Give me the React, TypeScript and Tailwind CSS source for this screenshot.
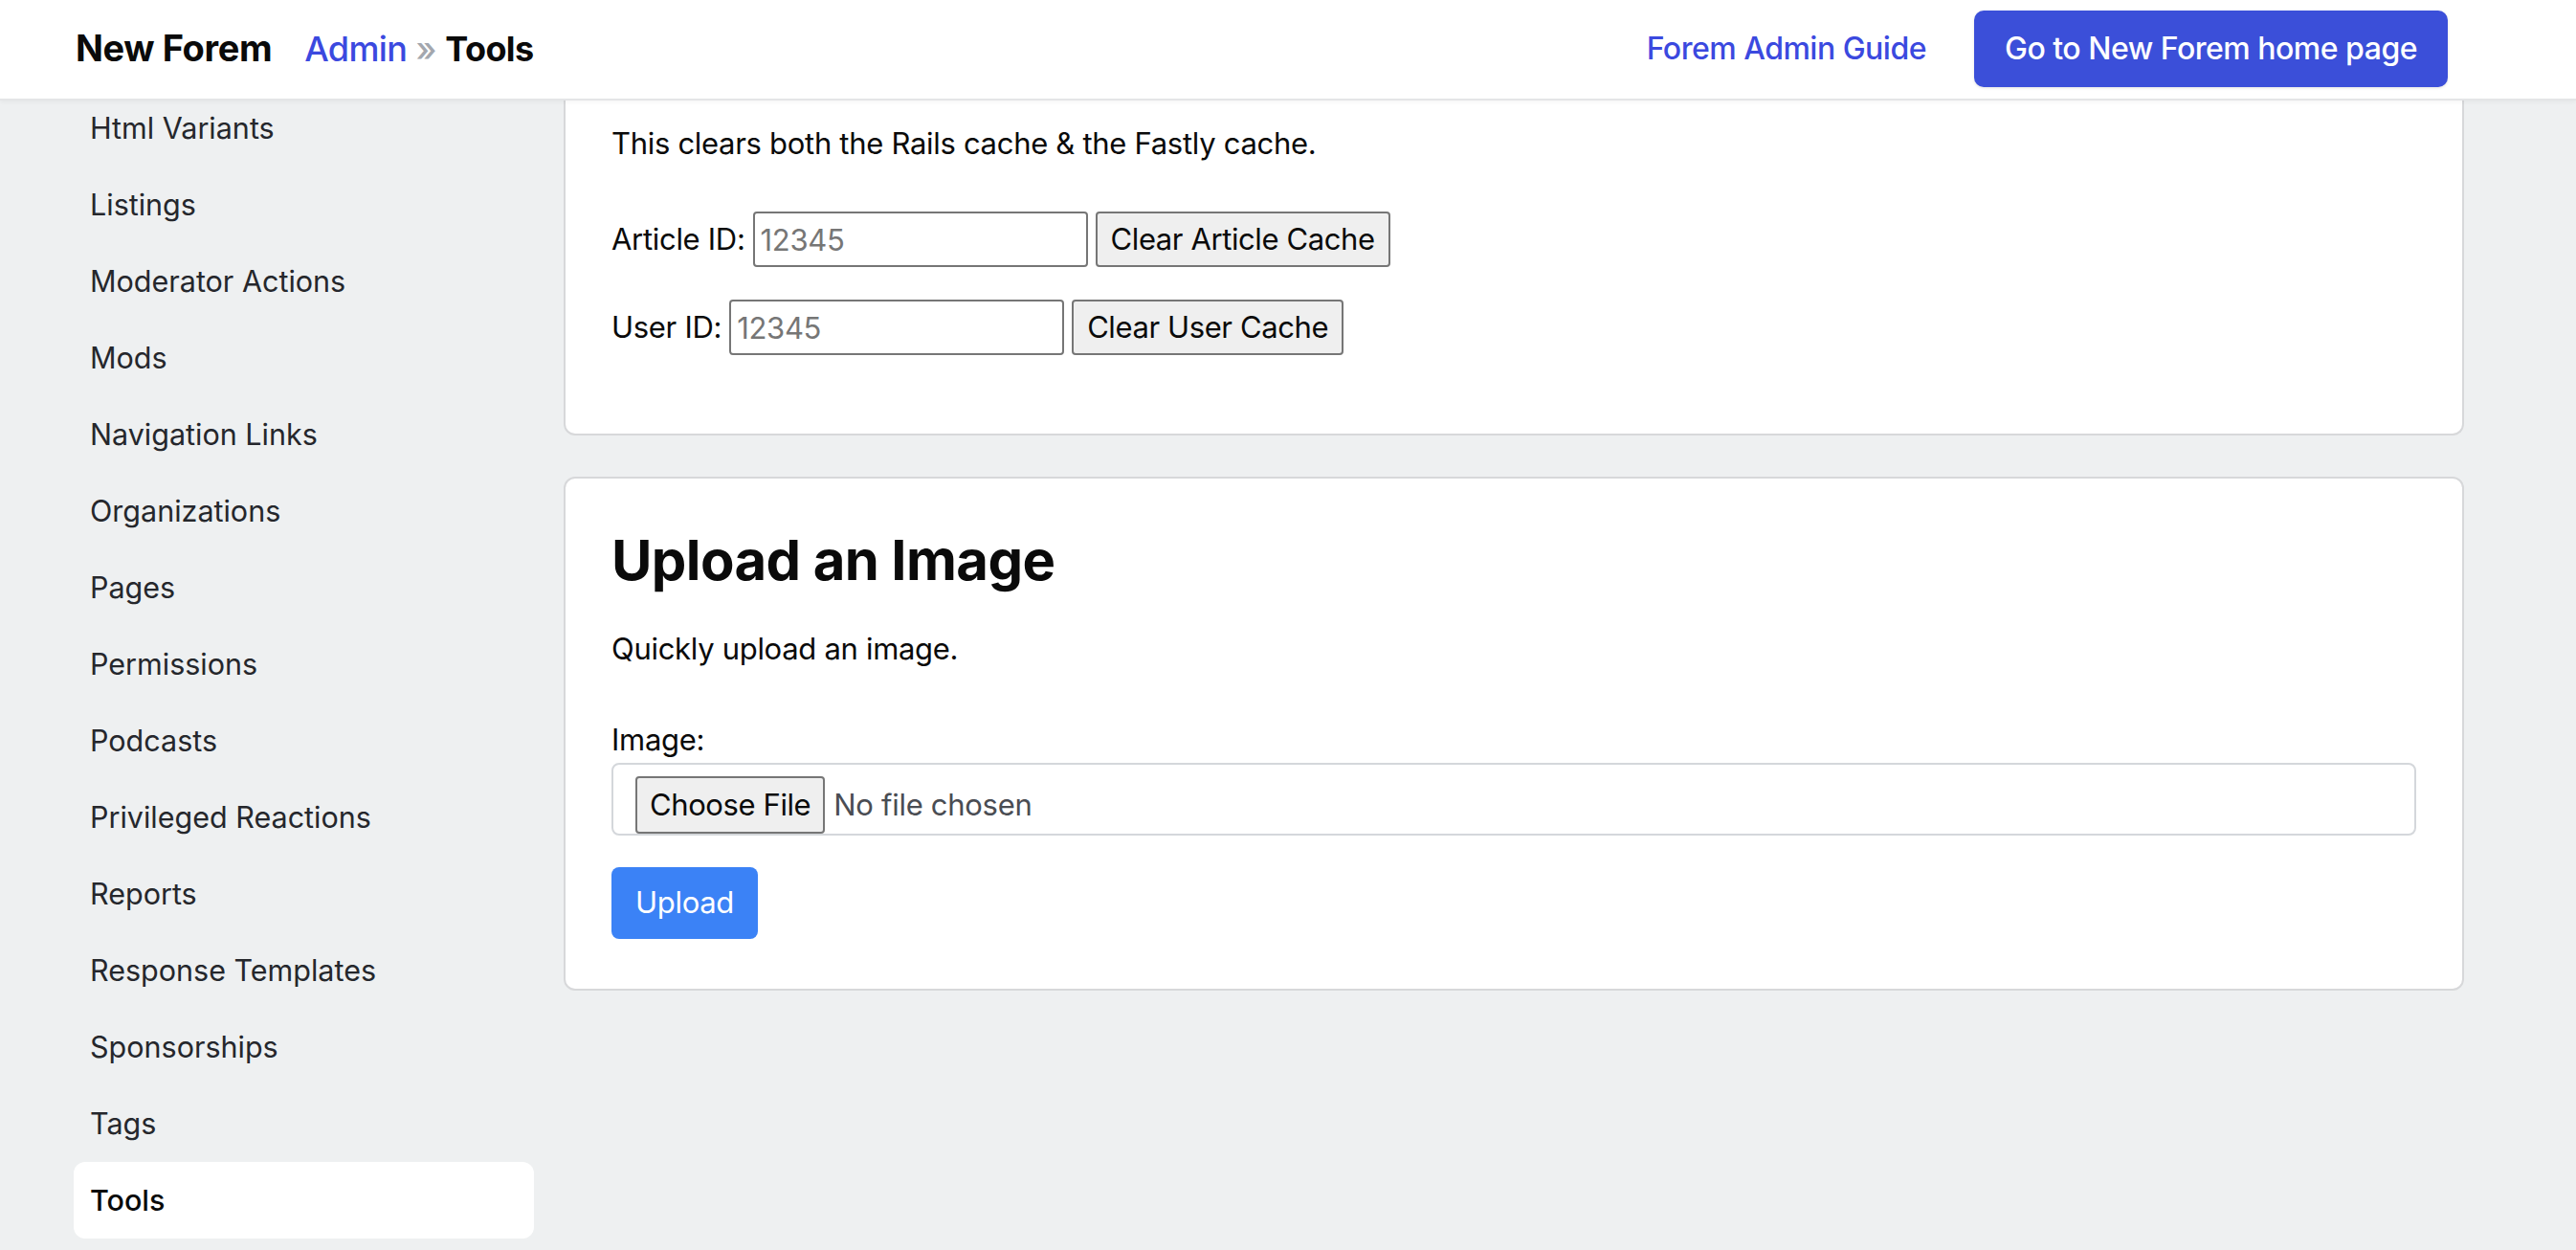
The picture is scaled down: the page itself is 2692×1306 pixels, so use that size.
import React from "react";

const items = [
  "Html Variants",
  "Listings",
  "Moderator Actions",
  "Mods",
  "Navigation Links",
  "Organizations",
  "Pages",
  "Permissions",
  "Podcasts",
  "Privileged Reactions",
  "Reports",
  "Response Templates",
  "Sponsorships",
  "Tags",
  "Tools",
];

export default function App() {
  return (
    <div className="w-[2692px] h-[1306px] overflow-hidden bg-[#eef0f1] font-['Inter',sans-serif] text-[#0a0a0a]">
      <header className="relative z-10 box-border h-[105px] bg-white border-b-2 border-[#e4e5e7] shadow-[0_2px_4px_rgba(0,0,0,0.04)] flex items-center pl-[79px] pr-[134px]">
        <div className="text-[38px] font-bold tracking-[-0.4px] text-[#0a0a0a] -mt-[2px]">New Forem</div>
        <div className="ml-[34px] flex items-center text-[36px] gap-[9px] -mt-[2px]">
          <span className="font-medium text-[#3b49df] tracking-[-0.6px]">Admin</span>
          <span className="text-[#a3a7ae] font-medium">»</span>
          <span className="font-bold tracking-[-0.6px]">Tools</span>
        </div>
        <div className="ml-auto flex items-center gap-[50px]">
          <span className="text-[32px] font-medium text-[#3b49df] tracking-[-0.5px] -mt-[2px]">Forem Admin Guide</span>
          <button className="h-[80px] px-[32px] rounded-[10px] bg-[#3b4fd9] text-white text-[32px] font-medium tracking-[-0.5px] shadow-[0_1px_3px_rgba(0,0,0,0.12)] -mt-[2px]">
            Go to New Forem home page
          </button>
        </div>
      </header>

      <div className="flex pl-[77px] gap-[31px]">
        <aside className="w-[481px] -mt-[11px] flex flex-col">
          {items.map((it) => (
            <div
              key={it}
              className={
                it === "Tools"
                  ? "h-[80px] flex items-center pl-[17px] rounded-[12px] bg-white text-[30.5px] font-medium text-[#0a0a0a]"
                  : "h-[80px] flex items-center pl-[17px] text-[30.5px] text-[#25272c]"
              }
            >
              {it}
            </div>
          ))}
        </aside>

        <main className="w-[1986px] flex flex-col gap-[43px]">
          <section className="bg-white border-2 border-t-0 border-[#d7d8da] rounded-b-[12px] px-[48px] pt-[21px] pb-[82px]">
            <p className="text-[31px] leading-[48px] tracking-[-0.3px]">This clears both the Rails cache &amp; the Fastly cache.</p>
            <div className="mt-[47px] flex items-center gap-[8px] text-[31px] tracking-[-0.3px]">
              <span>Article ID:</span>
              <input
                placeholder="12345"
                className="w-[350px] h-[58px] box-border border-2 border-[#767676] rounded-[4px] px-[6px] text-[31px] placeholder:text-[#767676] bg-white"
              />
              <button className="h-[58px] box-border border-2 border-[#767676] rounded-[4px] px-[14px] bg-[#efefef] text-[31px] tracking-[-0.4px]">
                Clear Article Cache
              </button>
            </div>
            <div className="mt-[34px] flex items-center gap-[8px] text-[31px] tracking-[-0.3px]">
              <span>User ID:</span>
              <input
                placeholder="12345"
                className="w-[350px] h-[58px] box-border border-2 border-[#767676] rounded-[4px] px-[6px] text-[31px] placeholder:text-[#767676] bg-white"
              />
              <button className="h-[58px] box-border border-2 border-[#767676] rounded-[4px] px-[14px] bg-[#efefef] text-[31px] tracking-[-0.4px]">
                Clear User Cache
              </button>
            </div>
          </section>

          <section className="bg-white border-2 border-[#d7d8da] rounded-[12px] px-[48px] pt-[51px] pb-[52px]">
            <h2 className="text-[58px] leading-[68px] font-bold tracking-[-0.6px]">Upload an Image</h2>
            <p className="mt-[35px] text-[31px] leading-[48px] tracking-[-0.3px]">Quickly upload an image.</p>
            <div className="mt-[47px] text-[31px] leading-[48px] tracking-[-0.3px]">Image:</div>
            <div className="box-border h-[76px] border-2 border-[#d4d7db] rounded-[8px] pl-[23px] pt-[12px] flex items-start gap-[9px]">
              <button className="h-[60px] box-border border-2 border-[#767676] rounded-[4px] px-[13px] bg-[#efefef] text-[31px] tracking-[-0.4px]">
                Choose File
              </button>
              <span className="h-[60px] flex items-center text-[31px] text-[#4a4d53] tracking-[-0.3px]">No file chosen</span>
            </div>
            <button className="mt-[33px] h-[75px] px-[25px] rounded-[8px] bg-[#3b82f6] text-white text-[31px] tracking-[-0.3px]">
              Upload
            </button>
          </section>
        </main>
      </div>
    </div>
  );
}
